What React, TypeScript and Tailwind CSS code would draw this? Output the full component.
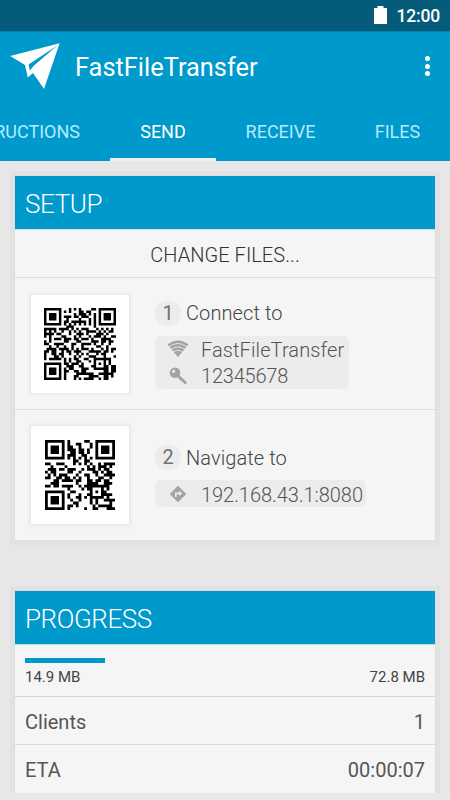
import { useMemo } from "react"
import type { ReactNode } from "react"
import { clsx } from "clsx"

interface QrSpec {
  version: number
  dataWords: number
  eccWords: number
}

const QR_V2: QrSpec = { version: 2, dataWords: 34, eccWords: 10 }
const QR_V3: QrSpec = { version: 3, dataWords: 55, eccWords: 15 }

const MASKS: ((x: number, y: number) => boolean)[] = [
  (x, y) => (x + y) % 2 === 0,
  (_x, y) => y % 2 === 0,
  (x) => x % 3 === 0,
  (x, y) => (x + y) % 3 === 0,
  (x, y) => (Math.floor(x / 3) + Math.floor(y / 2)) % 2 === 0,
  (x, y) => ((x * y) % 2) + ((x * y) % 3) === 0,
  (x, y) => (((x * y) % 2) + ((x * y) % 3)) % 2 === 0,
  (x, y) => (((x + y) % 2) + ((x * y) % 3)) % 2 === 0,
]

function gfMul(a: number, b: number) {
  let z = 0
  for (let i = 7; i >= 0; i--) {
    z = (z << 1) ^ ((z >>> 7) * 0x11d)
    z ^= ((b >>> i) & 1) * a
  }
  return z
}

function eccFor(data: number[], degree: number) {
  const gen = new Array(degree).fill(0)
  gen[degree - 1] = 1
  let root = 1
  for (let i = 0; i < degree; i++) {
    for (let j = 0; j < degree; j++) {
      gen[j] = gfMul(gen[j], root)
      if (j + 1 < degree) gen[j] ^= gen[j + 1]
    }
    root = gfMul(root, 2)
  }
  const rem: number[] = new Array(degree).fill(0)
  for (const b of data) {
    const factor = b ^ rem.shift()!
    rem.push(0)
    gen.forEach((g, i) => (rem[i] ^= gfMul(g, factor)))
  }
  return rem
}

function encode(text: string, spec: QrSpec) {
  const bits: number[] = []
  const push = (value: number, len: number) => {
    for (let i = len - 1; i >= 0; i--) bits.push((value >>> i) & 1)
  }
  push(4, 4)
  push(text.length, 8)
  for (const ch of text) push(ch.charCodeAt(0), 8)
  push(0, 4)
  const data: number[] = []
  for (let i = 0; i < bits.length; i += 8) {
    data.push(parseInt(bits.slice(i, i + 8).join("").padEnd(8, "0"), 2))
  }
  for (let pad = 0xec; data.length < spec.dataWords; pad ^= 0xec ^ 0x11) data.push(pad)
  return [...data, ...eccFor(data, spec.eccWords)]
}

function buildMatrix(words: number[], spec: QrSpec, mask: number) {
  const size = spec.version * 4 + 17
  const grid: number[][] = Array.from({ length: size }, () => new Array(size).fill(-1))
  const set = (x: number, y: number, on: boolean | number) => {
    if (x >= 0 && y >= 0 && x < size && y < size) grid[y][x] = on ? 1 : 0
  }

  for (let i = 0; i < size; i++) {
    set(6, i, i % 2 === 0)
    set(i, 6, i % 2 === 0)
  }
  for (const [cx, cy] of [[3, 3], [size - 4, 3], [3, size - 4]]) {
    for (let dy = -4; dy <= 4; dy++) {
      for (let dx = -4; dx <= 4; dx++) {
        const d = Math.max(Math.abs(dx), Math.abs(dy))
        set(cx + dx, cy + dy, d !== 2 && d !== 4)
      }
    }
  }
  for (let dy = -2; dy <= 2; dy++) {
    for (let dx = -2; dx <= 2; dx++) {
      set(size - 7 + dx, size - 7 + dy, Math.max(Math.abs(dx), Math.abs(dy)) !== 1)
    }
  }

  // Format info, level L
  const format = (1 << 3) | mask
  let rem = format
  for (let i = 0; i < 10; i++) rem = (rem << 1) ^ ((rem >>> 9) * 0x537)
  const info = ((format << 10) | rem) ^ 0x5412
  const bit = (i: number) => (info >>> i) & 1
  for (let i = 0; i < 6; i++) set(8, i, bit(i))
  set(8, 7, bit(6))
  set(8, 8, bit(7))
  set(7, 8, bit(8))
  for (let i = 9; i < 15; i++) set(14 - i, 8, bit(i))
  for (let i = 0; i < 8; i++) set(size - 1 - i, 8, bit(i))
  for (let i = 8; i < 15; i++) set(8, size - 15 + i, bit(i))
  set(8, size - 8, 1)

  let n = 0
  for (let right = size - 1; right >= 1; right -= 2) {
    if (right === 6) right = 5
    for (let v = 0; v < size; v++) {
      for (let j = 0; j < 2; j++) {
        const x = right - j
        const upward = ((right + 1) & 2) === 0
        const y = upward ? size - 1 - v : v
        if (grid[y][x] !== -1) continue
        const word = words[n >>> 3] ?? 0
        const on = (word >>> (7 - (n & 7))) & 1
        grid[y][x] = on ^ (MASKS[mask](x, y) ? 1 : 0)
        n++
      }
    }
  }
  return grid
}

function penalty(grid: number[][]) {
  const size = grid.length
  let score = 0
  const lines = [...grid, ...grid.map((_, x) => grid.map((row) => row[x]))]
  for (const line of lines) {
    const s = line.join("")
    for (const run of s.match(/0{5,}|1{5,}/g) ?? []) score += run.length - 2
    for (let i = 0; i < size; i++) {
      if (s.startsWith("10111010000", i) || s.startsWith("00001011101", i)) score += 40
    }
  }
  let dark = 0
  for (let y = 0; y < size; y++) {
    for (let x = 0; x < size; x++) {
      dark += grid[y][x]
      if (x + 1 < size && y + 1 < size) {
        const sum = grid[y][x] + grid[y][x + 1] + grid[y + 1][x] + grid[y + 1][x + 1]
        if (sum === 0 || sum === 4) score += 3
      }
    }
  }
  return score + Math.floor(Math.abs((dark * 20) / (size * size) - 10)) * 10
}

function QrCode({ text, spec, className }: { text: string; spec: QrSpec; className?: string }) {
  const grid = useMemo(() => {
    const words = encode(text, spec)
    const all = MASKS.map((_, mask) => buildMatrix(words, spec, mask))
    return all.reduce((best, g) => (penalty(g) < penalty(best) ? g : best))
  }, [text, spec])
  const d = grid
    .flatMap((row, y) => row.map((on, x) => (on ? `M${x} ${y}h1v1h-1z` : "")))
    .join("")

  return (
    <div className="flex h-[98px] w-[98px] shrink-0 items-center justify-center bg-white shadow-[0_0_0_1px_#e9e9e9,0_0_3px_2px_#ebebeb]">
      <svg viewBox={`0 0 ${grid.length} ${grid.length}`} className={className}>
        <path d={d} fill="#000" />
      </svg>
    </div>
  )
}

function PlaneIcon() {
  return (
    <svg viewBox="0 0 50 46" className="h-[46px] w-[50px]" fill="#fff" fillRule="evenodd">
      <path d="M0.2 13L49.6 0.2L34 46L23 30L17.8 34.4L15 22ZM47.3 2.4L18.6 21.6L19.8 27.6L24 22.4Z" />
    </svg>
  )
}

function WifiIcon() {
  return (
    <svg viewBox="0 0 22 17" className="h-[17px] w-[22px]">
      <path d="M0.5 4.5Q11 -3.5 21.5 4.5L11 17Z" fill="#a3a3a3" />
      <g fill="none" stroke="#ececec" strokeWidth="0.9">
        <path d="M2 6.8Q11 0.2 20 6.8" />
        <path d="M4 9.4Q11 4.4 18 9.4" />
        <path d="M6.3 12Q11 8.6 15.7 12" />
      </g>
    </svg>
  )
}

function KeyIcon() {
  return (
    <svg viewBox="0 0 18 17" className="h-[17px] w-[18px]">
      <path d="M7 7L16.3 15.6" stroke="#a3a3a3" strokeWidth="2.8" strokeLinecap="round" />
      <path d="M10.8 13L12.6 11" stroke="#a3a3a3" strokeWidth="1.6" />
      <circle cx="6" cy="5.8" r="5.3" fill="#a3a3a3" />
      <circle cx="4.6" cy="4.3" r="1.6" fill="#ececec" />
    </svg>
  )
}

function DirectionsIcon() {
  return (
    <svg viewBox="0 0 18 18" className="h-[18px] w-[18px]">
      <path d="M9 1.3L16.7 9L9 16.7L1.3 9Z" fill="#a3a3a3" stroke="#a3a3a3" strokeLinejoin="round" />
      <path d="M6.8 12V8.4H10.5" fill="none" stroke="#ececec" strokeWidth="1.7" />
      <path d="M10 5.6L13.1 8.4L10 11.2Z" fill="#ececec" />
    </svg>
  )
}

function Card({ title, className, children }: { title: string; className?: string; children: ReactNode }) {
  return (
    <section
      className={clsx(
        "mx-[15px] flex shrink-0 flex-col bg-[#f5f5f5] shadow-[0_0_0_1px_#dedede,0_0_0_5px_#e2e2e2]",
        className
      )}
    >
      <h2 className="flex h-[53px] items-center bg-[#0099cc] pt-[3px] pl-2.5 text-[26px] font-light tracking-[-0.4px] text-white">
        {title}
      </h2>
      {children}
    </section>
  )
}

function StepTitle({ step, children }: { step: number; children: ReactNode }) {
  return (
    <div className="flex h-[26px] items-center gap-[5px] text-[20px] text-[#444]">
      <span className="flex h-[26px] w-[26px] items-center justify-center rounded-full bg-[#ececec] text-[#707070]">
        {step}
      </span>
      <span className="pt-px font-light tracking-[0.1px]">{children}</span>
    </div>
  )
}

function InfoLine({ icon, className, children }: { icon: ReactNode; className?: string; children: ReactNode }) {
  return (
    <div className="flex h-[26.5px] items-center">
      <span className="flex w-[46px] justify-center">{icon}</span>
      <span className={clsx("pt-0.5", className)}>{children}</span>
    </div>
  )
}

const TABS = [
  { label: "INSTRUCTIONS", className: "w-[110px] justify-end pr-[30px]" },
  { label: "SEND", className: "w-[106px] justify-center" },
  { label: "RECEIVE", className: "w-[129px] justify-center" },
  { label: "FILES", className: "w-[105px] justify-center" },
]

export default function App() {
  const active = "SEND"

  return (
    <div className="flex h-[800px] w-[450px] flex-col overflow-hidden bg-[#e7e7e7] font-['Roboto',sans-serif]">
      {/* Status bar */}
      <div className="flex h-[31px] shrink-0 items-center justify-end bg-[#055c7a] pr-[10px] text-white">
        <svg viewBox="0 0 13 18" className="mr-[10px] mb-px h-[18px] w-[13px]" fill="#fff">
          <path d="M3.5 0h6v2H13v16H0V2h3.5z" />
        </svg>
        <span className="pt-px text-[17.5px] font-medium tracking-[-0.2px]">12:00</span>
      </div>

      {/* App bar */}
      <header className="shrink-0 bg-[#0099cc] shadow-[inset_0_2px_1px_-1px_#0681ab]">
        <div className="flex h-[70px] items-center pr-5 pl-2.5 text-white">
          <PlaneIcon />
          <h1 className="ml-[15px] flex-1 pt-[3px] text-[25.4px]">FastFileTransfer</h1>
          <div className="flex flex-col gap-[2.5px]">
            <span className="h-[5px] w-[5px] rounded-full bg-white" />
            <span className="h-[5px] w-[5px] rounded-full bg-white" />
            <span className="h-[5px] w-[5px] rounded-full bg-white" />
          </div>
        </div>
        <nav className="flex h-[60px] text-[18px]">
          {TABS.map((tab) => (
            <button
              key={tab.label}
              className={clsx(
                "flex shrink-0 items-center border-b-[3px] pt-1",
                tab.className,
                tab.label === active
                  ? "border-[#eeeeee] text-white"
                  : "border-transparent text-[#b3eaff]"
              )}
            >
              {tab.label}
            </button>
          ))}
        </nav>
      </header>

      <main className="flex flex-1 flex-col pt-[15px]">
        <Card title="SETUP" className="h-[364px]">
          <div className="flex h-[49px] items-center justify-center border-t border-b border-t-[#dcdcdc] border-b-[#dcdcdc] pt-0.5 text-[20px] font-light tracking-[0.05px] text-[#333]">
            CHANGE FILES...
          </div>
          <div className="flex h-[132px] items-center border-b border-[#dcdcdc] pt-px pl-4">
            <QrCode
              text="WIFI:T:WPA;S:FastFileTransfer;P:12345678;;"
              spec={QR_V3}
              className="h-[72px] w-[72px]"
            />
            <div className="ml-[26px]">
              <StepTitle step={1}>Connect to</StepTitle>
              <div className="mt-2.5 rounded-md bg-[#ececec] pr-[5px] text-[20px] font-light text-[#555]">
                <InfoLine icon={<WifiIcon />} className="tracking-[0.1px]">
                  FastFileTransfer
                </InfoLine>
                <InfoLine icon={<KeyIcon />} className="tracking-[-0.2px]">
                  12345678
                </InfoLine>
              </div>
            </div>
          </div>
          <div className="flex flex-1 items-center pl-4">
            <QrCode text="http://192.168.43.1:8080" spec={QR_V2} className="h-[70px] w-[70px]" />
            <div className="ml-[26px] pt-px">
              <StepTitle step={2}>Navigate to</StepTitle>
              <div className="mt-2.5 rounded-md bg-[#ececec] pr-[3px] text-[20px] font-light text-[#555]">
                <InfoLine icon={<DirectionsIcon />} className="tracking-[-0.05px]">
                  192.168.43.1:8080
                </InfoLine>
              </div>
            </div>
          </div>
        </Card>

        <Card title="PROGRESS" className="mt-[51px] h-[202px]">
          <div className="h-[53px] border-t border-b border-t-[#c4d8e2] border-b-[#d6d6d6] px-2.5 pt-[13px]">
            <div className="h-[5px] w-20 bg-[#0099cc]" />
            <div className="flex justify-between text-[15px] leading-[28px] text-[#444]">
              <span>14.9 MB</span>
              <span>72.8 MB</span>
            </div>
          </div>
          <div className="flex h-12 items-center justify-between border-b border-[#d9d9d9] px-2.5 pt-0.5 text-[20px] text-[#555]">
            <span>Clients</span>
            <span>1</span>
          </div>
          <div className="flex h-12 items-center justify-between px-2.5 pt-0.5 text-[20px] text-[#555]">
            <span>ETA</span>
            <span>00:00:07</span>
          </div>
        </Card>
        <div className="relative flex-1 bg-[#e9e9e9]" />
      </main>
    </div>
  )
}
